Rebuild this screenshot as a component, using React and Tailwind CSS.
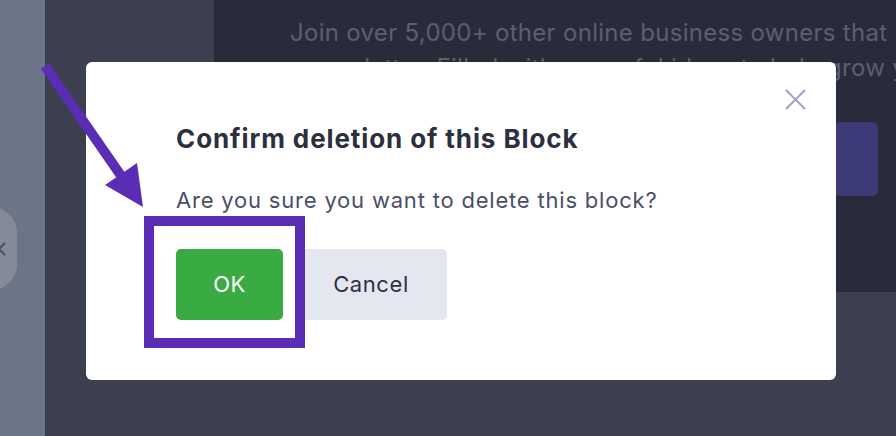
import React from "react";

export default function App() {
  const font = { fontFamily: "Inter, 'Noto Sans', sans-serif" };
  return (
    <div className="relative w-[896px] h-[436px] overflow-hidden flex" style={font}>
      {/* left strip */}
      <div className="w-[45px] shrink-0 h-full bg-[#6b7587] relative overflow-hidden">
        <div className="absolute left-[-34px] top-[207px] w-[51px] h-[83px] rounded-[26px] bg-[#848a98] flex items-center justify-end pr-[10px]">
          <svg width="10" height="16" viewBox="0 0 10 16">
            <path d="M8 2 L2 8 L8 14" stroke="#4b5061" strokeWidth="2.2" fill="none" />
          </svg>
        </div>
      </div>
      {/* main area */}
      <div className="flex-1 min-w-0 h-full bg-[#3b3f4f] pl-[169px] overflow-hidden">
        <div className="h-[292px] bg-[#292b3b] flex flex-col pl-[76px] pt-[15px] relative">
          <p className="text-[24px] leading-[35px] text-[#5b5f73] whitespace-nowrap tracking-[0.3px]">
            Join over 5,000+ other online business owners that
          </p>
          <p className="text-[24px] leading-[35px] text-[#5b5f73] whitespace-nowrap pl-[13px] tracking-[0.3px]">
            newsletter. Filled with powerful ideas to help grow your
          </p>
          <div className="absolute left-[620px] top-[122px] w-[44px] h-[74px] rounded-[6px] bg-[#3c3b78]" />
        </div>
      </div>

      {/* dialog */}
      <div className="absolute left-[86px] top-[62px] w-[750px] h-[318px] bg-white rounded-[6px] pl-[90px] pt-[62px]">
        <div className="absolute right-[30px] top-[27px]">
          <svg width="21" height="21" viewBox="0 0 21 21">
            <path d="M1 1 L20 20 M20 1 L1 20" stroke="#a49fcd" strokeWidth="2" />
          </svg>
        </div>
        <h2 className="text-[26px] leading-[30px] font-bold text-[#2b2f3e] tracking-[0.9px] whitespace-nowrap">
          Confirm deletion of this Block
        </h2>
        <p className="mt-[31px] text-[22px] leading-[30px] text-[#4a4f68] whitespace-nowrap tracking-[0.8px]">
          Are you sure you want to delete this block?
        </p>
        <div className="mt-[34px] flex gap-[12px]">
          <button className="w-[107px] h-[71px] rounded-[5px] bg-[#3aaa43] text-white text-[22px] tracking-[0.5px]">OK</button>
          <button className="w-[152px] h-[71px] rounded-[5px] bg-[#e5e7f0] text-[#2d3142] text-[22px] tracking-[0.6px]">Cancel</button>
        </div>
      </div>

      {/* highlight box */}
      <div className="absolute left-[144px] top-[216px] w-[161px] h-[132px] border-[10px] border-[#5b2db4]" />

      {/* arrow */}
      <svg className="absolute left-0 top-0" width="896" height="436" viewBox="0 0 896 436">
        <line x1="45" y1="66" x2="124" y2="180" stroke="#5b2db4" strokeWidth="10" />
        <polygon points="105,185 137,163 143,207" fill="#5b2db4" />
      </svg>
    </div>
  );
}
